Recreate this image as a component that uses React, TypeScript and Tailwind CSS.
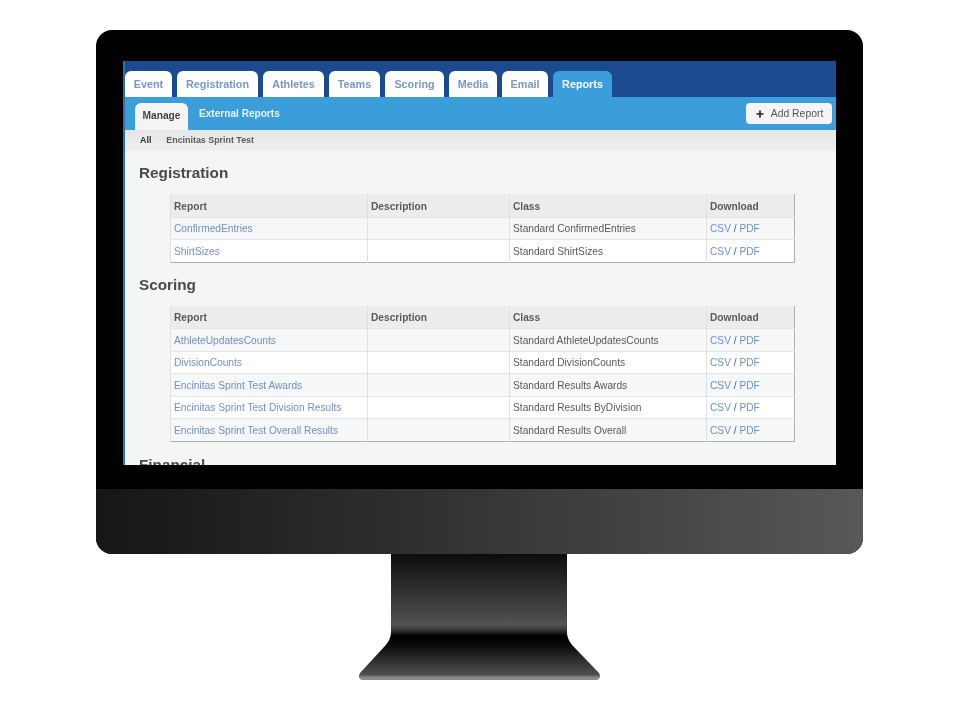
import React from 'react';
import { Plus } from 'lucide-react';

type Row = { name: string; cls: string };

const tabs = [
  { label: 'Event', width: 'w-[47px]' },
  { label: 'Registration', width: 'w-[81px]' },
  { label: 'Athletes', width: 'w-[61px]' },
  { label: 'Teams', width: 'w-[51px]' },
  { label: 'Scoring', width: 'w-[59px]' },
  { label: 'Media', width: 'w-[48px]' },
  { label: 'Email', width: 'w-[46px]' },
];

const registration: Row[] = [
  { name: 'ConfirmedEntries', cls: 'Standard ConfirmedEntries' },
  { name: 'ShirtSizes', cls: 'Standard ShirtSizes' },
];

const scoring: Row[] = [
  { name: 'AthleteUpdatesCounts', cls: 'Standard AthleteUpdatesCounts' },
  { name: 'DivisionCounts', cls: 'Standard DivisionCounts' },
  { name: 'Encinitas Sprint Test Awards', cls: 'Standard Results Awards' },
  { name: 'Encinitas Sprint Test Division Results', cls: 'Standard Results ByDivision' },
  { name: 'Encinitas Sprint Test Overall Results', cls: 'Standard Results Overall' },
];

const ReportTable = ({ rows }: { rows: Row[] }) => (
  <table className="ml-[45px] w-[625px] table-fixed border-collapse border-r border-b border-[#b0b0b0] text-[10.2px] text-[#5a5a5a]">
    <colgroup>
      <col className="w-[197px]" />
      <col className="w-[142px]" />
      <col className="w-[197px]" />
      <col />
    </colgroup>
    <thead>
      <tr className="h-[23px] bg-[#ececec] text-left">
        {['Report', 'Description', 'Class', 'Download'].map((h) => (
          <th key={h} className="border-l border-[#e0e0e0] pt-[2px] pr-1 pl-[3px] font-bold">
            {h}
          </th>
        ))}
      </tr>
    </thead>
    <tbody>
      {rows.map((r) => (
        <tr key={r.name} className="h-[22.5px] border-t border-[#e4e4e4] odd:bg-[#f6f7f8] even:bg-white">
          <td className="border-l border-[#e0e0e0] pt-px pr-1 pl-[3px] text-[#7390c6]">{r.name}</td>
          <td className="border-l border-[#e0e0e0] pr-1 pl-[3px]" />
          <td className="border-l border-[#e0e0e0] pt-px pr-1 pl-[3px]">{r.cls}</td>
          <td className="border-l border-[#e0e0e0] pt-px pr-1 pl-[3px]">
            <span className="text-[#7390c6]">CSV</span> / <span className="text-[#7390c6]">PDF</span>
          </td>
        </tr>
      ))}
    </tbody>
  </table>
);

const Section = ({ title, children }: { title: string; children?: React.ReactNode }) => (
  <section className="mb-[9px]">
    <h2 className="mb-[10px] h-6 pt-px pl-[14px] text-[15.3px]/6 font-bold text-[#4a4a4a]">{title}</h2>
    {children}
  </section>
);

export default function App() {
  return (
    <div className="h-[704px] w-[960px] overflow-hidden bg-white pt-[30px] font-['Liberation_Sans',Arial,sans-serif]">
      {/* monitor */}
      <div className="ml-[96px] w-[767px] overflow-hidden rounded-2xl bg-black">
        <div className="px-[27px] pt-[31px] pb-[24px]">
          <div className="h-[404px] overflow-hidden border-l-2 border-[#2f70b0] bg-[#f4f5f5] blur-[0.5px]">
            <div className="-ml-[2px] flex h-[36px] items-end gap-[5px] bg-[#1b4a8e] pl-[2px]">
              {tabs.map((t) => (
                <div
                  key={t.label}
                  className={`${t.width} flex h-[26px] items-center justify-center rounded-t-md bg-white pt-px text-[10.8px] font-bold text-[#7b97c9]`}
                >
                  {t.label}
                </div>
              ))}
              <div className="flex h-[26px] w-[59px] items-center justify-center rounded-t-md bg-[#3b9edb] pt-px text-[10.8px] font-bold text-white">
                Reports
              </div>
            </div>
            <div className="flex h-[33px] items-end bg-[#3b9edb] pl-[10px]">
              <div className="flex h-[27px] w-[53px] items-center justify-center rounded-t-md bg-[#f4f4f4] pb-[2px] text-[10.2px] font-bold text-[#444]">
                Manage
              </div>
              <div className="mb-[5px] ml-[11px] h-[22px] text-[10.1px]/[22px] font-bold text-[#eaf4fb]">External Reports</div>
              <button className="mr-[4px] mb-[6px] ml-auto flex h-[21px] w-[86px] items-center justify-center gap-[6px] rounded-sm bg-[#f5f5f5] text-[10.4px] text-[#555]">
                <Plus size={10} strokeWidth={4} className="text-[#222]" />
                Add Report
              </button>
            </div>
            <div className="flex h-[21px] items-center gap-[15px] bg-gradient-to-b from-[#e6e6e6] to-[#efefef] pl-[15px] text-[8.9px] font-bold text-[#5a5a5a]">
              <span className="text-[#333]">All</span>
              <span>Encinitas Sprint Test</span>
            </div>
            <div className="pt-[9px]">
              <Section title="Registration">
                <ReportTable rows={registration} />
              </Section>
              <Section title="Scoring">
                <ReportTable rows={scoring} />
              </Section>
              <div className="pt-px">
                <Section title="Financial" />
              </div>
            </div>
          </div>
        </div>
        <div className="h-[65px] bg-gradient-to-r from-[#161616] to-[#585858]" />
      </div>
      {/* stand */}
      <svg className="ml-[358px]" width="244" height="128" viewBox="0 0 244 128">
        <defs>
          <linearGradient id="standFill" x1="0" y1="0" x2="0" y2="1">
            <stop offset="0" stopColor="#0c0c0c" />
            <stop offset="0.5" stopColor="#4a4a4a" />
            <stop offset="0.56" stopColor="#555" />
            <stop offset="0.6" stopColor="#3a3a3a" />
            <stop offset="0.65" stopColor="#000" />
            <stop offset="0.72" stopColor="#0a0a0a" />
            <stop offset="0.96" stopColor="#505050" />
            <stop offset="0.98" stopColor="#8a8a8a" />
          </linearGradient>
        </defs>
        <path
          d="M33 0H209V78C209 84 212 89 216 93L241 119C243 122 242 126 238 126H5C1 126 0 122 2 119L26 93C30 89 33 84 33 78Z"
          fill="url(#standFill)"
        />
      </svg>
    </div>
  );
}
